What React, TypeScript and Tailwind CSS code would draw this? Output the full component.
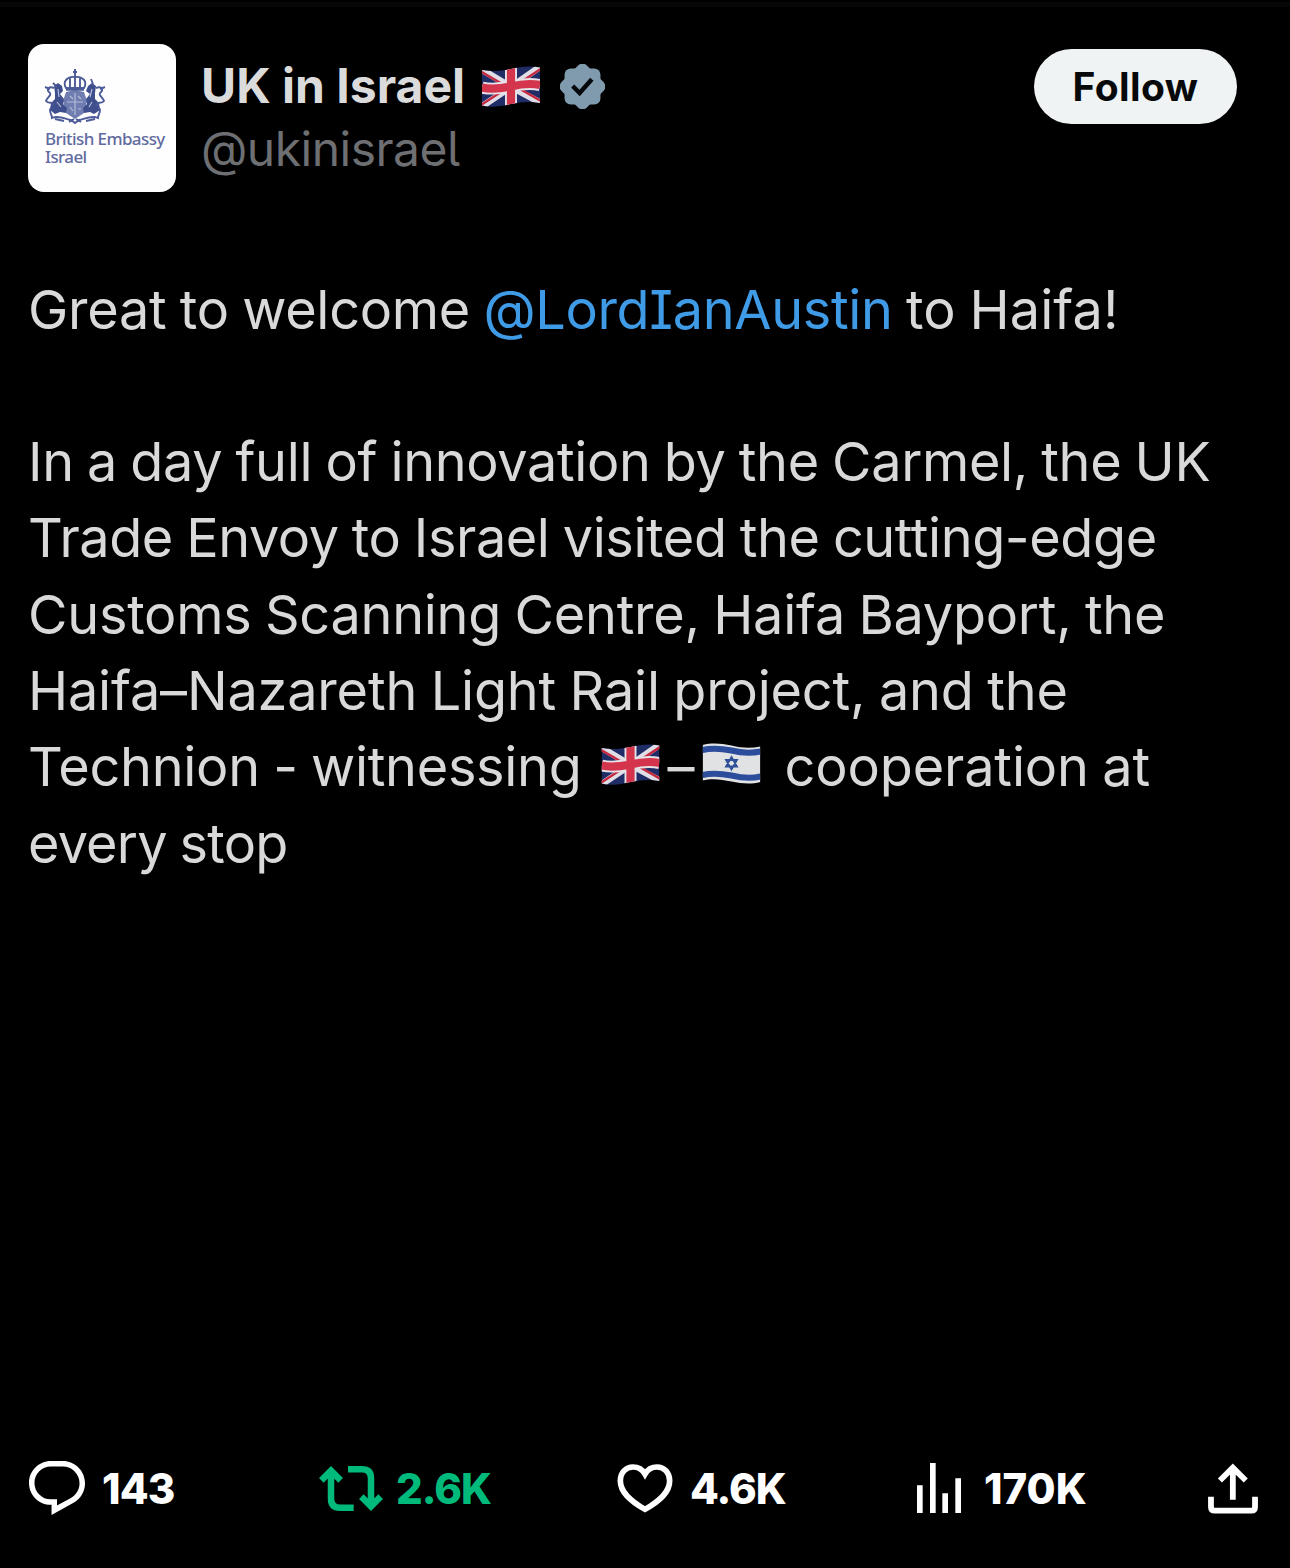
import clsx from "clsx";
import type { ReactNode } from "react";

interface IconProps {
    className?: string;
}

interface LineProps {
    className?: string;
    children?: ReactNode;
}

interface StatProps {
    icon: ReactNode;
    value?: string;
    className?: string;
    valueClassName?: string;
}

export default function App() {
    return (
        <div className="flex h-[1568px] w-[1290px] flex-col overflow-hidden bg-black font-['Inter','Liberation_Sans',sans-serif]">
            <div className="mt-0.5 h-[5px] shrink-0 bg-[#070707]" />
            <Header />
            <Post />
            <Stats />
        </div>
    );
}

function Header() {
    return (
        <header className="mt-[37px] flex h-[148px] shrink-0 items-start pr-[53px] pl-7">
            <Avatar />
            <div className="ml-[25px] flex flex-col pt-[11px]">
                <div className="flex h-[62px] items-center">
                    <span className="text-[48px] leading-[62px] font-bold whitespace-nowrap text-[#dbdbdb]">
                        UK in Israel
                    </span>
                    <UkFlag className="ml-[17px] h-[41px] w-[58px]" />
                    <VerifiedBadge className="ml-5 h-[45px] w-[45px]" />
                </div>
                <span className="text-[48px] leading-[63px] font-[430] tracking-[-0.5px] whitespace-nowrap text-[#6d6f72] [font-feature-settings:'cv05']">
                    @ukinisrael
                </span>
            </div>
            <button className="mt-[5px] ml-auto h-[75px] w-[203px] rounded-full bg-[#eff3f4] text-[39px] leading-[75px] font-bold tracking-[0.4px] text-[#07090b]">
                Follow
            </button>
        </header>
    );
}

function Avatar() {
    return (
        <div className="flex h-[148px] w-[148px] shrink-0 flex-col overflow-hidden rounded-[16px] bg-[#fefefe] pt-[25px] pl-4">
            <Crest className="h-[56px] w-[62px]" />
            <div className="mt-[5px] ml-px flex flex-col font-['Noto_Sans',sans-serif] text-[17px] leading-[18px] font-medium tracking-[-0.6px] whitespace-nowrap text-[#626b9f]">
                <span>British Embassy</span>
                <span>Israel</span>
            </div>
        </div>
    );
}

function Post() {
    return (
        <main className="mt-[80px] text-[54px] font-[430] text-[#d9d9d9] [word-spacing:-1.5px]">
            <Line className="tracking-[-0.27px]">
                Great to welcome{" "}
                <span className="tracking-[-0.35px] text-[#3f9be6] [font-feature-settings:'cv08']">
                    @LordIanAustin
                </span>{" "}
                <span className="tracking-[0.1px]">to Haifa!</span>
            </Line>
            <Line className="h-[75.5px]" />
            <Line className="tracking-[-0.36px]">
                In a day full of innovation by the Carmel, the UK
            </Line>
            <Line className="tracking-[-0.42px]">
                Trade Envoy to Israel visited the cutting-edge
            </Line>
            <Line className="tracking-[-0.25px]">
                Customs Scanning Centre, Haifa Bayport, the
            </Line>
            <Line className="tracking-[-0.18px]">
                Haifa–Nazareth Light Rail project, and the
            </Line>
            <Line className="tracking-[-0.3px]">
                Technion - witnessing
                <UkFlag className="mr-[8px] ml-[19px] inline-block h-[41px] w-[59px] align-[1px]" />
                –
                <IsraelFlag className="mr-[10px] ml-[8px] inline-block h-[41px] w-[59px] align-[2px]" />{" "}
                <span className="tracking-[-0.15px]">cooperation at</span>
            </Line>
            <Line className="tracking-[-0.8px]">every stop</Line>
        </main>
    );
}

function Line({ className, children }: LineProps) {
    return (
        <div
            className={clsx(
                "pl-7 leading-[76.4px] whitespace-nowrap",
                children && "h-[76.4px]",
                className
            )}
        >
            {children}
        </div>
    );
}

function Stats() {
    return (
        <footer className="mt-auto mb-[40px] grid h-[80px] grid-cols-[290px_298px_300px_291px_auto] pl-[29px] text-white">
            <Stat
                icon={<ReplyIcon className="h-[54px] w-[56px]" />}
                value="143"
                valueClassName="ml-[17px] tracking-[-0.8px]"
            />
            <Stat
                icon={<RepostIcon className="h-[45px] w-[64px]" />}
                value="2.6K"
                className="text-[#00ba7c]"
                valueClassName="ml-[13px] tracking-[-1px]"
            />
            <Stat
                icon={<HeartIcon className="mt-px h-[49px] w-[56px]" />}
                value="4.6K"
                valueClassName="ml-[17px] tracking-[-1px]"
            />
            <Stat
                icon={<ViewsIcon className="h-[50px] w-[44px]" />}
                value="170K"
                valueClassName="ml-[23px]"
            />
            <Stat icon={<ShareIcon className="h-[51px] w-[50px]" />} />
        </footer>
    );
}

function Stat({ icon, value, className, valueClassName }: StatProps) {
    return (
        <div className={clsx("flex items-center", className)}>
            {icon}
            {value && (
                <span
                    className={clsx(
                        "pt-0.5 text-[42px] leading-[78px] font-extrabold",
                        valueClassName
                    )}
                >
                    {value}
                </span>
            )}
        </div>
    );
}

function ReplyIcon({ className }: IconProps) {
    return (
        <svg
            viewBox="1.75 2 20.5 19.7"
            className={className}
            fill="currentColor"
        >
            <path d="M1.751 10c0-4.42 3.584-8 8.005-8h4.366c4.49 0 8.129 3.64 8.129 8.13 0 2.96-1.607 5.68-4.196 7.11l-8.054 4.46v-3.69h-.067c-4.49.1-8.183-3.51-8.183-8.01zm8.005-6c-3.317 0-6.005 2.69-6.005 6 0 3.37 2.77 6.08 6.138 6.01l.351-.01h1.761v2.3l5.087-2.81c1.951-1.08 3.163-3.13 3.163-5.36 0-3.39-2.744-6.13-6.129-6.13H9.756z" />
        </svg>
    );
}

function RepostIcon({ className }: IconProps) {
    return (
        <svg
            viewBox="27 48 192 135"
            className={className}
            fill="none"
            stroke="currentColor"
            strokeWidth={19.5}
        >
            <path d="M34 91L63 62L92 91M63 64V146Q63 173 90 173H131" />
            <path d="M154 140L183 169L212 140M183 167V85Q183 58 156 58H114" />
        </svg>
    );
}

function HeartIcon({ className }: IconProps) {
    return (
        <svg
            viewBox="22 44 166 147"
            className={className}
            fill="none"
            stroke="currentColor"
            strokeWidth={17}
        >
            <path d="M105 74C97 60 84 53 69 53C47 53 31 70 31 94C31 128 60 154 105 180C150 154 179 128 179 94C179 70 163 53 141 53C126 53 113 60 105 74Z" />
        </svg>
    );
}

function ViewsIcon({ className }: IconProps) {
    return (
        <svg
            viewBox="51 40 132 150"
            className={className}
            fill="currentColor"
        >
            <path d="M51 107h17v83H51zM90 40h17v150H90zM127 131h17v59h-17zM166 86h17v104h-17z" />
        </svg>
    );
}

function ShareIcon({ className }: IconProps) {
    return (
        <svg
            viewBox="924 38 151 152"
            className={className}
            fill="none"
            stroke="currentColor"
            strokeWidth={17.5}
        >
            <path d="M960 90L999 51L1038 90M999 52V148" />
            <path d="M933 139V170Q933 181 944 181H1055Q1066 181 1066 170V139" />
        </svg>
    );
}

// two rounded squares, one turned 45 degrees, make the eight-pointed seal
function VerifiedBadge({ className }: IconProps) {
    return (
        <svg viewBox="-9.4 -9.4 18.8 18.8" className={className}>
            <g fill="#7f9bad">
                <rect x={-7.5} y={-7.5} width={15} height={15} rx={2.6} />
                <rect
                    x={-7.5}
                    y={-7.5}
                    width={15}
                    height={15}
                    rx={2.6}
                    transform="rotate(45)"
                />
            </g>
            <path
                fill="none"
                stroke="#05080a"
                strokeWidth={1.85}
                d="M-4.1 -0.2L-1.2 2.700L3.900 -3"
            />
        </svg>
    );
}

function UkFlag({ className }: IconProps) {
    return (
        <svg viewBox="0 0 58 41" className={className} fill="none">
            <clipPath id="uk-wave">
                <path d="M0 4C10 6 19 5 29 3C39 0.500 48 -0.500 58 1.500V37C48 35 39 36 29 38C19 40.500 10 42 0 39.500Z" />
            </clipPath>
            <g clipPath="url(#uk-wave)">
                <path fill="#1f2c66" d="M0 0H58V41H0Z" />
                <path
                    stroke="#dfdde6"
                    strokeWidth={6.5}
                    d="M-1 3L29 21L59 37M-1 41L29 21L59 0"
                />
                <path
                    stroke="#c8283f"
                    strokeWidth={2.4}
                    d="M-2 5L27 22M31 19L59 35M-1 39L28 20M30 22L60 2"
                />
                <path
                    stroke="#e6e2e8"
                    strokeWidth={12}
                    d="M0 21.500C10 24 19 22.500 29 20.500C39 18 48 17 58 19M29 0V41"
                />
                <path
                    stroke="#d4344c"
                    strokeWidth={8.2}
                    d="M0 21.500C10 24 19 22.500 29 20.500C39 18 48 17 58 19M29 0V41"
                />
            </g>
        </svg>
    );
}

function IsraelFlag({ className }: IconProps) {
    return (
        <svg viewBox="0 0 58 41" className={className} fill="none">
            <clipPath id="il-wave">
                <path d="M0 2C10 -0.500 19 0.500 29 2.500C39 5 48 5.500 58 3.500V39C48 41.500 39 40.500 29 38.500C19 36.500 10 35 0 37.500Z" />
            </clipPath>
            <g clipPath="url(#il-wave)">
                <path fill="#e0e2e4" d="M0 0H58V41H0Z" />
                <path
                    stroke="#2c4c9c"
                    strokeWidth={6}
                    d="M0 7C10 4.500 19 5.500 29 7.500C39 10 48 10.500 58 8.500M0 32C10 29.500 19 30.500 29 32.500C39 35 48 36 58 33.500"
                />
                <path
                    stroke="#2f4f98"
                    strokeWidth={1.8}
                    d="M29 14L34.500 23.500H23.500ZM29 26.500L23.500 17H34.500Z"
                />
            </g>
        </svg>
    );
}

// royal arms: crown, quartered shield, lion on the left and unicorn on the right
function Crest({ className }: IconProps) {
    return (
        <svg
            viewBox="0 0 62 56"
            className={className}
            fill="none"
            stroke="#4d5b98"
            strokeWidth={1.9}
        >
            <g fill="#6f7db0" stroke="none">
                <path d="M22 23L31 21L40 23L43 32L40 44L31 50L22 44L19 32Z" />
                <path
                    fill="#3f4e8c"
                    d="M10 17L14 14L18 17L19 22L16 25L20 30L19 35L23 39L22 44L16 43L11 45L6 41L7 34L11 30L11 24Z"
                />
                <path
                    fill="#3f4e8c"
                    d="M52 17L48 14L44 17L42 22L46 25L42 30L43 35L39 39L40 44L46 43L50 45L56 41L55 34L51 30L51 24Z"
                />
            </g>
            <path d="M22 19C18 12 24 7 31 8C38 7 44 12 40 19ZM31 8V19M26 9V18M36 9V18M31 0V7M29 3H33" />
            <path d="M22 20.500H40" strokeWidth={2.5} />
            <path d="M10 19C5 17 2 20 5 23C9 26 3 28 2 32C5 36 9 31 9 37M6 20L1 18M13 18L9 14" />
            <path d="M52 19C57 17 60 20 57 23C53 26 59 28 60 32C57 36 53 31 53 37M56 20L61 18M49 15L47 10" />
            <path d="M7 39C4 42 8 45 8 49C15 46 21 50 27 51L31 54L35 51C41 50 47 46 54 49C54 45 58 42 55 39M11 50L20 52M51 50L42 52M25 53L30 50M37 53L32 50" />
            <path
                stroke="#b4bdd8"
                strokeWidth={1.2}
                d="M31 24V46M23 33H39M26 27L29 30M34 27L37 30M26 38L29 42M34 40H37M14 20L15 28M13 33L17 38M48 20L46 28M48 33L45 38"
            />
        </svg>
    );
}
